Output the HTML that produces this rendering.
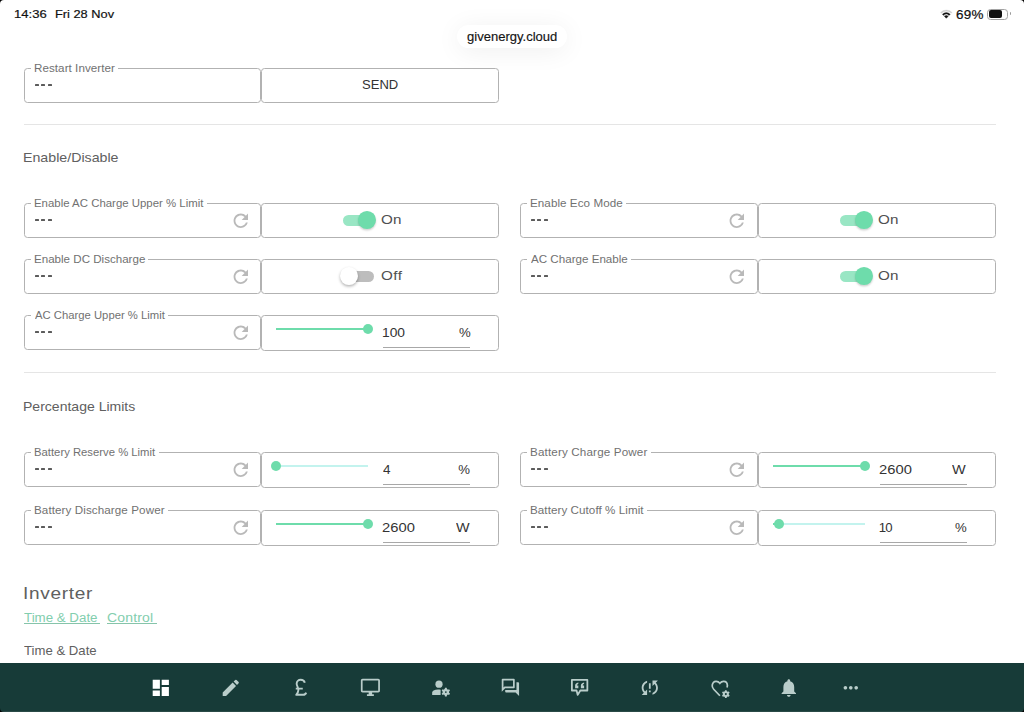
<!DOCTYPE html>
<html><head><meta charset="utf-8"><style>
html,body{margin:0;padding:0;width:1024px;height:712px;overflow:hidden;background:#fff;position:relative}
.t{position:absolute;white-space:pre;font-family:"Liberation Sans",sans-serif}
</style></head><body>
<svg style="position:absolute;left:0;top:0" width="1024" height="30" viewBox="0 0 1024 30"><path d="M946.3 18.2L944.46 16.36A2.6 2.6 0 0 1 948.14 16.36Z" fill="#111" stroke="#111" stroke-width="0.5" stroke-linejoin="round"/><path d="M943.54 15.44L942.34 14.24A5.6 5.6 0 0 1 950.26 14.24L949.06 15.44A3.9 3.9 0 0 0 943.54 15.44Z" fill="#111" stroke="#111" stroke-width="0.3" stroke-linejoin="round"/><path d="M941.42 13.32L940.50 12.40A8.2 8.2 0 0 1 952.10 12.40L951.18 13.32A6.9 6.9 0 0 0 941.42 13.32Z" fill="#cfcfcf" stroke="#cfcfcf" stroke-width="0.3" stroke-linejoin="round"/></svg>
<div style="position:absolute;left:987px;top:8.5px;width:19px;height:9px;border:1.2px solid #a3a3a3;border-radius:3.5px"></div>
<div style="position:absolute;left:989px;top:10.3px;width:12.6px;height:7.3px;background:#111;border-radius:2px"></div>
<div style="position:absolute;left:1009.5px;top:11.6px;width:1.3px;height:3.6px;background:#9a9a9a;border-radius:0 1px 1px 0"></div>
<div style="position:absolute;left:457px;top:25px;width:110px;height:23px;border-radius:12px;background:#fff;box-shadow:0 3px 26px rgba(0,0,0,0.065)"></div>
<div style="position:absolute;left:24px;top:68px;width:235px;height:33px;border:1px solid #b2b2b2;border-radius:3.5px"></div>
<div style="position:absolute;left:30.5px;top:67px;width:87.5px;height:3px;background:#fff"></div>
<div style="position:absolute;left:34.80px;top:84.20px;width:4.2px;height:1.5px;background:#5c5c5c;border-radius:0.5px"></div>
<div style="position:absolute;left:41.20px;top:84.20px;width:4.2px;height:1.5px;background:#5c5c5c;border-radius:0.5px"></div>
<div style="position:absolute;left:47.60px;top:84.20px;width:4.2px;height:1.5px;background:#5c5c5c;border-radius:0.5px"></div>
<div style="position:absolute;left:261px;top:68px;width:236px;height:33px;border:1px solid #b2b2b2;border-radius:3.5px"></div>
<div style="position:absolute;left:24px;top:124px;width:972px;height:1px;background:#e5e5e5"></div>
<div style="position:absolute;left:24px;top:203px;width:235px;height:33px;border:1px solid #b2b2b2;border-radius:3.5px"></div>
<div style="position:absolute;left:30.5px;top:202px;width:176.3px;height:3px;background:#fff"></div>
<div style="position:absolute;left:34.80px;top:219.20px;width:4.2px;height:1.5px;background:#5c5c5c;border-radius:0.5px"></div>
<div style="position:absolute;left:41.20px;top:219.20px;width:4.2px;height:1.5px;background:#5c5c5c;border-radius:0.5px"></div>
<div style="position:absolute;left:47.60px;top:219.20px;width:4.2px;height:1.5px;background:#5c5c5c;border-radius:0.5px"></div>
<svg style="position:absolute;left:229.8px;top:209.7px" width="21.6" height="21.6" viewBox="0 0 24 24"><path d="M17.65 6.35C16.2 4.9 14.21 4 12 4c-4.42 0-7.99 3.58-7.99 8s3.57 8 7.99 8c3.73 0 6.84-2.55 7.73-6h-2.08c-.82 2.33-3.04 4-5.65 4-3.31 0-6-2.69-6-6s2.69-6 6-6c1.66 0 3.14.69 4.22 1.78L13 11h7V4l-2.35 2.35z" fill="#b9b9b9"/></svg>
<div style="position:absolute;left:261px;top:203px;width:236px;height:33px;border:1px solid #b2b2b2;border-radius:3.5px"></div>
<div style="position:absolute;left:343.3px;top:214.5px;width:30.4px;height:11.5px;border-radius:6px;background:#6edcab;opacity:0.7"></div>
<div style="position:absolute;left:358.1px;top:211.3px;width:17.8px;height:17.8px;border-radius:50%;background:#6edcab;box-shadow:0 1.5px 2px rgba(0,0,0,0.18)"></div>
<div style="position:absolute;left:520px;top:203px;width:236px;height:33px;border:1px solid #b2b2b2;border-radius:3.5px"></div>
<div style="position:absolute;left:526.5px;top:202px;width:99.0px;height:3px;background:#fff"></div>
<div style="position:absolute;left:530.80px;top:219.20px;width:4.2px;height:1.5px;background:#5c5c5c;border-radius:0.5px"></div>
<div style="position:absolute;left:537.20px;top:219.20px;width:4.2px;height:1.5px;background:#5c5c5c;border-radius:0.5px"></div>
<div style="position:absolute;left:543.60px;top:219.20px;width:4.2px;height:1.5px;background:#5c5c5c;border-radius:0.5px"></div>
<svg style="position:absolute;left:725.8px;top:209.7px" width="21.6" height="21.6" viewBox="0 0 24 24"><path d="M17.65 6.35C16.2 4.9 14.21 4 12 4c-4.42 0-7.99 3.58-7.99 8s3.57 8 7.99 8c3.73 0 6.84-2.55 7.73-6h-2.08c-.82 2.33-3.04 4-5.65 4-3.31 0-6-2.69-6-6s2.69-6 6-6c1.66 0 3.14.69 4.22 1.78L13 11h7V4l-2.35 2.35z" fill="#b9b9b9"/></svg>
<div style="position:absolute;left:758px;top:203px;width:236px;height:33px;border:1px solid #b2b2b2;border-radius:3.5px"></div>
<div style="position:absolute;left:840.3px;top:214.5px;width:30.4px;height:11.5px;border-radius:6px;background:#6edcab;opacity:0.7"></div>
<div style="position:absolute;left:855.0999999999999px;top:211.3px;width:17.8px;height:17.8px;border-radius:50%;background:#6edcab;box-shadow:0 1.5px 2px rgba(0,0,0,0.18)"></div>
<div style="position:absolute;left:24px;top:259px;width:235px;height:33px;border:1px solid #b2b2b2;border-radius:3.5px"></div>
<div style="position:absolute;left:30.5px;top:258px;width:117.69999999999999px;height:3px;background:#fff"></div>
<div style="position:absolute;left:34.80px;top:275.20px;width:4.2px;height:1.5px;background:#5c5c5c;border-radius:0.5px"></div>
<div style="position:absolute;left:41.20px;top:275.20px;width:4.2px;height:1.5px;background:#5c5c5c;border-radius:0.5px"></div>
<div style="position:absolute;left:47.60px;top:275.20px;width:4.2px;height:1.5px;background:#5c5c5c;border-radius:0.5px"></div>
<svg style="position:absolute;left:229.8px;top:265.7px" width="21.6" height="21.6" viewBox="0 0 24 24"><path d="M17.65 6.35C16.2 4.9 14.21 4 12 4c-4.42 0-7.99 3.58-7.99 8s3.57 8 7.99 8c3.73 0 6.84-2.55 7.73-6h-2.08c-.82 2.33-3.04 4-5.65 4-3.31 0-6-2.69-6-6s2.69-6 6-6c1.66 0 3.14.69 4.22 1.78L13 11h7V4l-2.35 2.35z" fill="#b9b9b9"/></svg>
<div style="position:absolute;left:261px;top:259px;width:236px;height:33px;border:1px solid #b2b2b2;border-radius:3.5px"></div>
<div style="position:absolute;left:343.3px;top:270.5px;width:30.4px;height:11.5px;border-radius:6px;background:#bdbdbd"></div>
<div style="position:absolute;left:340.40000000000003px;top:267.3px;width:17.8px;height:17.8px;border-radius:50%;background:#fff;box-shadow:0 1.5px 3px rgba(0,0,0,0.3)"></div>
<div style="position:absolute;left:520px;top:259px;width:236px;height:33px;border:1px solid #b2b2b2;border-radius:3.5px"></div>
<div style="position:absolute;left:526.5px;top:258px;width:104.0px;height:3px;background:#fff"></div>
<div style="position:absolute;left:530.80px;top:275.20px;width:4.2px;height:1.5px;background:#5c5c5c;border-radius:0.5px"></div>
<div style="position:absolute;left:537.20px;top:275.20px;width:4.2px;height:1.5px;background:#5c5c5c;border-radius:0.5px"></div>
<div style="position:absolute;left:543.60px;top:275.20px;width:4.2px;height:1.5px;background:#5c5c5c;border-radius:0.5px"></div>
<svg style="position:absolute;left:725.8px;top:265.7px" width="21.6" height="21.6" viewBox="0 0 24 24"><path d="M17.65 6.35C16.2 4.9 14.21 4 12 4c-4.42 0-7.99 3.58-7.99 8s3.57 8 7.99 8c3.73 0 6.84-2.55 7.73-6h-2.08c-.82 2.33-3.04 4-5.65 4-3.31 0-6-2.69-6-6s2.69-6 6-6c1.66 0 3.14.69 4.22 1.78L13 11h7V4l-2.35 2.35z" fill="#b9b9b9"/></svg>
<div style="position:absolute;left:758px;top:259px;width:236px;height:33px;border:1px solid #b2b2b2;border-radius:3.5px"></div>
<div style="position:absolute;left:840.3px;top:270.5px;width:30.4px;height:11.5px;border-radius:6px;background:#6edcab;opacity:0.7"></div>
<div style="position:absolute;left:855.0999999999999px;top:267.3px;width:17.8px;height:17.8px;border-radius:50%;background:#6edcab;box-shadow:0 1.5px 2px rgba(0,0,0,0.18)"></div>
<div style="position:absolute;left:24px;top:315px;width:235px;height:33px;border:1px solid #b2b2b2;border-radius:3.5px"></div>
<div style="position:absolute;left:30.5px;top:314px;width:137.6px;height:3px;background:#fff"></div>
<div style="position:absolute;left:34.80px;top:331.20px;width:4.2px;height:1.5px;background:#5c5c5c;border-radius:0.5px"></div>
<div style="position:absolute;left:41.20px;top:331.20px;width:4.2px;height:1.5px;background:#5c5c5c;border-radius:0.5px"></div>
<div style="position:absolute;left:47.60px;top:331.20px;width:4.2px;height:1.5px;background:#5c5c5c;border-radius:0.5px"></div>
<svg style="position:absolute;left:229.8px;top:321.7px" width="21.6" height="21.6" viewBox="0 0 24 24"><path d="M17.65 6.35C16.2 4.9 14.21 4 12 4c-4.42 0-7.99 3.58-7.99 8s3.57 8 7.99 8c3.73 0 6.84-2.55 7.73-6h-2.08c-.82 2.33-3.04 4-5.65 4-3.31 0-6-2.69-6-6s2.69-6 6-6c1.66 0 3.14.69 4.22 1.78L13 11h7V4l-2.35 2.35z" fill="#b9b9b9"/></svg>
<div style="position:absolute;left:261px;top:315px;width:236px;height:34px;border:1px solid #b2b2b2;border-radius:3.5px"></div>
<div style="position:absolute;left:275.8px;top:328.4px;width:92.0px;height:2px;background:#c3f3ee"></div>
<div style="position:absolute;left:275.8px;top:328.4px;width:92.0px;height:2px;background:#6edcab"></div>
<div style="position:absolute;left:362.8px;top:324.4px;width:10px;height:10px;border-radius:50%;background:#6edcab"></div>
<div style="position:absolute;left:382.5px;top:346.5px;width:87px;height:1px;background:#a8a8a8"></div>
<div style="position:absolute;left:24px;top:372px;width:972px;height:1px;background:#e5e5e5"></div>
<div style="position:absolute;left:24px;top:452px;width:235px;height:33px;border:1px solid #b2b2b2;border-radius:3.5px"></div>
<div style="position:absolute;left:30.5px;top:451px;width:128.0px;height:3px;background:#fff"></div>
<div style="position:absolute;left:34.80px;top:468.20px;width:4.2px;height:1.5px;background:#5c5c5c;border-radius:0.5px"></div>
<div style="position:absolute;left:41.20px;top:468.20px;width:4.2px;height:1.5px;background:#5c5c5c;border-radius:0.5px"></div>
<div style="position:absolute;left:47.60px;top:468.20px;width:4.2px;height:1.5px;background:#5c5c5c;border-radius:0.5px"></div>
<svg style="position:absolute;left:229.8px;top:458.7px" width="21.6" height="21.6" viewBox="0 0 24 24"><path d="M17.65 6.35C16.2 4.9 14.21 4 12 4c-4.42 0-7.99 3.58-7.99 8s3.57 8 7.99 8c3.73 0 6.84-2.55 7.73-6h-2.08c-.82 2.33-3.04 4-5.65 4-3.31 0-6-2.69-6-6s2.69-6 6-6c1.66 0 3.14.69 4.22 1.78L13 11h7V4l-2.35 2.35z" fill="#b9b9b9"/></svg>
<div style="position:absolute;left:261px;top:452px;width:236px;height:34px;border:1px solid #b2b2b2;border-radius:3.5px"></div>
<div style="position:absolute;left:275.8px;top:465.4px;width:92.0px;height:2px;background:#c3f3ee"></div>
<div style="position:absolute;left:270.8px;top:461.4px;width:10px;height:10px;border-radius:50%;background:#6edcab"></div>
<div style="position:absolute;left:382.5px;top:483.5px;width:87px;height:1px;background:#a8a8a8"></div>
<div style="position:absolute;left:520px;top:452px;width:236px;height:33px;border:1px solid #b2b2b2;border-radius:3.5px"></div>
<div style="position:absolute;left:526.5px;top:451px;width:124.0px;height:3px;background:#fff"></div>
<div style="position:absolute;left:530.80px;top:468.20px;width:4.2px;height:1.5px;background:#5c5c5c;border-radius:0.5px"></div>
<div style="position:absolute;left:537.20px;top:468.20px;width:4.2px;height:1.5px;background:#5c5c5c;border-radius:0.5px"></div>
<div style="position:absolute;left:543.60px;top:468.20px;width:4.2px;height:1.5px;background:#5c5c5c;border-radius:0.5px"></div>
<svg style="position:absolute;left:725.8px;top:458.7px" width="21.6" height="21.6" viewBox="0 0 24 24"><path d="M17.65 6.35C16.2 4.9 14.21 4 12 4c-4.42 0-7.99 3.58-7.99 8s3.57 8 7.99 8c3.73 0 6.84-2.55 7.73-6h-2.08c-.82 2.33-3.04 4-5.65 4-3.31 0-6-2.69-6-6s2.69-6 6-6c1.66 0 3.14.69 4.22 1.78L13 11h7V4l-2.35 2.35z" fill="#b9b9b9"/></svg>
<div style="position:absolute;left:758px;top:452px;width:236px;height:34px;border:1px solid #b2b2b2;border-radius:3.5px"></div>
<div style="position:absolute;left:772.8px;top:465.4px;width:92.0px;height:2px;background:#c3f3ee"></div>
<div style="position:absolute;left:772.8px;top:465.4px;width:92.0px;height:2px;background:#6edcab"></div>
<div style="position:absolute;left:859.8px;top:461.4px;width:10px;height:10px;border-radius:50%;background:#6edcab"></div>
<div style="position:absolute;left:879.5px;top:483.5px;width:87px;height:1px;background:#a8a8a8"></div>
<div style="position:absolute;left:24px;top:510px;width:235px;height:33px;border:1px solid #b2b2b2;border-radius:3.5px"></div>
<div style="position:absolute;left:30.5px;top:509px;width:137.2px;height:3px;background:#fff"></div>
<div style="position:absolute;left:34.80px;top:526.20px;width:4.2px;height:1.5px;background:#5c5c5c;border-radius:0.5px"></div>
<div style="position:absolute;left:41.20px;top:526.20px;width:4.2px;height:1.5px;background:#5c5c5c;border-radius:0.5px"></div>
<div style="position:absolute;left:47.60px;top:526.20px;width:4.2px;height:1.5px;background:#5c5c5c;border-radius:0.5px"></div>
<svg style="position:absolute;left:229.8px;top:516.7px" width="21.6" height="21.6" viewBox="0 0 24 24"><path d="M17.65 6.35C16.2 4.9 14.21 4 12 4c-4.42 0-7.99 3.58-7.99 8s3.57 8 7.99 8c3.73 0 6.84-2.55 7.73-6h-2.08c-.82 2.33-3.04 4-5.65 4-3.31 0-6-2.69-6-6s2.69-6 6-6c1.66 0 3.14.69 4.22 1.78L13 11h7V4l-2.35 2.35z" fill="#b9b9b9"/></svg>
<div style="position:absolute;left:261px;top:510px;width:236px;height:34px;border:1px solid #b2b2b2;border-radius:3.5px"></div>
<div style="position:absolute;left:275.8px;top:523.4px;width:92.0px;height:2px;background:#c3f3ee"></div>
<div style="position:absolute;left:275.8px;top:523.4px;width:92.0px;height:2px;background:#6edcab"></div>
<div style="position:absolute;left:362.8px;top:519.4px;width:10px;height:10px;border-radius:50%;background:#6edcab"></div>
<div style="position:absolute;left:382.5px;top:541.5px;width:87px;height:1px;background:#a8a8a8"></div>
<div style="position:absolute;left:520px;top:510px;width:236px;height:33px;border:1px solid #b2b2b2;border-radius:3.5px"></div>
<div style="position:absolute;left:526.5px;top:509px;width:120.39999999999998px;height:3px;background:#fff"></div>
<div style="position:absolute;left:530.80px;top:526.20px;width:4.2px;height:1.5px;background:#5c5c5c;border-radius:0.5px"></div>
<div style="position:absolute;left:537.20px;top:526.20px;width:4.2px;height:1.5px;background:#5c5c5c;border-radius:0.5px"></div>
<div style="position:absolute;left:543.60px;top:526.20px;width:4.2px;height:1.5px;background:#5c5c5c;border-radius:0.5px"></div>
<svg style="position:absolute;left:725.8px;top:516.7px" width="21.6" height="21.6" viewBox="0 0 24 24"><path d="M17.65 6.35C16.2 4.9 14.21 4 12 4c-4.42 0-7.99 3.58-7.99 8s3.57 8 7.99 8c3.73 0 6.84-2.55 7.73-6h-2.08c-.82 2.33-3.04 4-5.65 4-3.31 0-6-2.69-6-6s2.69-6 6-6c1.66 0 3.14.69 4.22 1.78L13 11h7V4l-2.35 2.35z" fill="#b9b9b9"/></svg>
<div style="position:absolute;left:758px;top:510px;width:236px;height:34px;border:1px solid #b2b2b2;border-radius:3.5px"></div>
<div style="position:absolute;left:772.8px;top:523.4px;width:92.0px;height:2px;background:#c3f3ee"></div>
<div style="position:absolute;left:772.8px;top:523.4px;width:5.75px;height:2px;background:#6edcab"></div>
<div style="position:absolute;left:773.55px;top:519.4px;width:10px;height:10px;border-radius:50%;background:#6edcab"></div>
<div style="position:absolute;left:879.5px;top:541.5px;width:87px;height:1px;background:#a8a8a8"></div>
<div style="position:absolute;left:24px;top:622.6px;width:76.4px;height:1px;background:#86c4aa"></div>
<div style="position:absolute;left:107.4px;top:622.6px;width:49.2px;height:1px;background:#86c4aa"></div>
<div style="position:absolute;left:0;top:662.5px;width:1024px;height:49.5px;background:#173b38"></div>
<div style="position:absolute;left:0;top:711px;width:1024px;height:1px;background:#2a4a47"></div>
<svg style="position:absolute;left:150.00px;top:677.00px" width="21.6" height="21.6" viewBox="0 0 24 24"><path d="M3 13h8V3H3v10zm0 8h8v-6H3v6zm10 0h8V11h-8v10zm0-18v6h8V3h-8z" fill="#ffffff"/></svg>
<svg style="position:absolute;left:220.30px;top:677.00px" width="21.6" height="21.6" viewBox="0 0 24 24"><path d="M3 17.25V21h3.75L17.81 9.94l-3.75-3.75L3 17.25zM20.71 7.04c.39-.39.39-1.02 0-1.41l-2.34-2.34a.9959.9959 0 0 0-1.41 0l-1.83 1.83 3.75 3.75 1.83-1.83z" fill="#b9cdca"/></svg>
<svg style="position:absolute;left:290.10px;top:677.00px" width="21.6" height="21.6" viewBox="0 0 24 24"><path d="M16.5 6.4C15.9 4.3 14.1 3.0 11.9 3.0C9.3 3.0 7.4 5.0 7.4 7.5C7.4 9.7 9.3 11.5 9.3 14.5C9.3 17 8.0 18.6 6.9 19.8H14.8C16.4 19.8 17.5 19 18 17.4M6.4 12.9H14.2" fill="none" stroke="#b9cdca" stroke-width="2.1" stroke-linejoin="round"/></svg>
<svg style="position:absolute;left:359.80px;top:677.10px" width="20.8" height="20.8" viewBox="0 0 24 24"><path d="M21 2H3c-1.1 0-2 .9-2 2v12c0 1.1.9 2 2 2h7v2H8v2h8v-2h-2v-2h7c1.1 0 2-.9 2-2V4c0-1.1-.9-2-2-2zm0 14H3V4h18v12z" fill="#b9cdca"/></svg>
<svg style="position:absolute;left:429.70px;top:677.00px" width="21.6" height="21.6" viewBox="0 0 24 24"><circle cx="10" cy="8" r="4" fill="#b9cdca"/><path d="M2.4 20V17.6C2.4 16.4 3 15.4 4 14.9C6 13.9 8.5 13.6 11.8 14.1V20Z" fill="#b9cdca"/><g transform="translate(17.6 16.8) scale(0.96) translate(-17 -16)"><path d="M20.75 16c0-.22-.03-.42-.06-.63l1.14-1.01-1-1.73-1.45.49c-.32-.27-.68-.48-1.08-.63L18 11h-2l-.3 1.49c-.4.15-.76.36-1.08.63l-1.45-.49-1 1.73 1.14 1.01c-.03.21-.06.41-.06.63s.03.42.06.63l-1.14 1.01 1 1.73 1.45-.49c.32.27.68.48 1.08.63L16 21h2l.3-1.49c.4-.15.76-.36 1.08-.63l1.45.49 1-1.73-1.14-1.01c.03-.21.06-.41.06-.63z" fill="#b9cdca" stroke="#173b38" stroke-width="1.3" paint-order="stroke"/><circle cx="17" cy="16" r="1.0" fill="#173b38"/></g></svg>
<svg style="position:absolute;left:499.50px;top:677.00px" width="20.8" height="20.8" viewBox="0 0 24 24"><path d="M15 4v7H5.17l-.59.59-.58.58V4h11m1-2H3c-.55 0-1 .45-1 1v14l4-4h10c.55 0 1-.45 1-1V3c0-.55-.45-1-1-1zm5 4h-2v9H6v2c0 .55.45 1 1 1h11l4 4V7c0-.55-.45-1-1-1z" fill="#b9cdca"/></svg>
<svg style="position:absolute;left:569.00px;top:677.00px" width="21.6" height="21.6" viewBox="0 0 24 24"><path d="M3.2 3.2H20.4V15H12.6L9.7 19.9L8.4 15H3.2Z" fill="none" stroke="#b9cdca" stroke-width="2" stroke-linejoin="round"/><path d="M6.8 12.4V9.7C6.8 8 7.8 6.8 10.4 6.2V7.6C9.4 8 8.9 8.6 8.8 9.4H10.4V12.4Z M13.2 12.4V9.7C13.2 8 14.2 6.8 16.8 6.2V7.6C15.8 8 15.3 8.6 15.2 9.4H16.8V12.4Z" fill="#b9cdca"/></svg>
<svg style="position:absolute;left:638.80px;top:677.00px" width="21.6" height="21.6" viewBox="0 0 24 24"><path d="M3 12c0 2.21.91 4.2 2.36 5.64L3 20h6v-6l-2.24 2.24C5.68 15.15 5 13.66 5 12c0-2.61 1.67-4.83 4-5.65V4.26C5.55 5.15 3 8.27 3 12zm8 5h2v-2h-2v2zM21 4h-6v6l2.24-2.24C18.32 8.85 19 10.34 19 12c0 2.61-1.67 4.830-4 5.65v2.09c3.45-.89 6-4.01 6-7.74 0-2.21-.91-4.2-2.36-5.64L21 4zm-10 9h2V7h-2v6z" fill="#b9cdca"/></svg>
<svg style="position:absolute;left:708.70px;top:677.60px" width="21.6" height="21.6" viewBox="0 0 24 24"><path d="M12.1 19.7L5.2 12.5C3.9 11.1 3.3 9.7 3.6 8.0C4.0 5.5 5.6 3.8 7.8 3.7C9.6 3.6 11.1 4.6 12.1 5.9C13.1 4.6 14.6 3.6 16.4 3.7C18.6 3.8 20.3 5.6 20.4 8.0C20.5 9 20.3 9.8 20.0 10.6" fill="none" stroke="#b9cdca" stroke-width="1.9"/><g transform="translate(18.7 17.9) scale(0.88) translate(-17 -16)"><path d="M20.75 16c0-.22-.03-.42-.06-.63l1.14-1.01-1-1.73-1.45.49c-.32-.27-.68-.48-1.08-.63L18 11h-2l-.3 1.49c-.4.15-.76.36-1.08.63l-1.45-.49-1 1.73 1.14 1.01c-.03.21-.06.41-.06.63s.03.42.06.63l-1.14 1.01 1 1.73 1.45-.49c.32.27.68.48 1.08.63L16 21h2l.3-1.49c.4-.15.76-.36 1.08-.63l1.45.49 1-1.73-1.14-1.01c.03-.21.06-.41.06-.63z" fill="#b9cdca" stroke="#173b38" stroke-width="1.2" paint-order="stroke"/><circle cx="17" cy="16" r="1.3" fill="#173b38"/></g></svg>
<svg style="position:absolute;left:778.40px;top:677.20px" width="21.6" height="21.6" viewBox="0 0 24 24"><path d="M12 22c1.1 0 2-.9 2-2h-4c0 1.1.89 2 2 2zm6-6v-5c0-3.07-1.64-5.64-4.5-6.32V4c0-.83-.67-1.5-1.5-1.5s-1.5.67-1.5 1.5v.68C7.63 5.36 6 7.92 6 11v5l-2 2v1h16v-1l-2-2z" fill="#b9cdca"/></svg>
<svg style="position:absolute;left:840.00px;top:677.00px" width="21.6" height="21.6" viewBox="0 0 24 24"><path d="M6 10c-1.1 0-2 .9-2 2s.9 2 2 2 2-.9 2-2-.9-2-2-2zm12 0c-1.1 0-2 .9-2 2s.9 2 2 2 2-.9 2-2-.9-2-2-2zm-6 0c-1.1 0-2 .9-2 2s.9 2 2 2 2-.9 2-2-.9-2-2-2z" fill="#b9cdca"/></svg>
<div class="t" style="left:13.95px;top:8.67px;font-size:11.8px;line-height:11.8px;letter-spacing:0.000px;color:#111;font-weight:400;transform:scaleX(1.1074);transform-origin:0 0;-webkit-text-stroke:0.2px #111;">14:36</div>
<div class="t" style="left:54.98px;top:8.67px;font-size:11.8px;line-height:11.8px;letter-spacing:0.000px;color:#111;font-weight:400;transform:scaleX(1.0850);transform-origin:0 0;-webkit-text-stroke:0.2px #111;">Fri 28 Nov</div>
<div class="t" style="left:956.13px;top:8.70px;font-size:12.0px;line-height:12.0px;letter-spacing:0.266px;color:#111;font-weight:400;transform:scaleX(1.1200);transform-origin:0 0;-webkit-text-stroke:0.2px #111;">69%</div>
<div class="t" style="left:466.88px;top:30.82px;font-size:12.8px;line-height:12.8px;letter-spacing:0.000px;color:#141414;font-weight:400;transform:scaleX(1.0180);transform-origin:0 0;-webkit-text-stroke:0.15px #141414;">givenergy.cloud</div>
<div class="t" style="left:33.77px;top:63.56px;font-size:10.4px;line-height:10.4px;letter-spacing:0.042px;color:#717171;font-weight:400;transform:scaleX(1.1200);transform-origin:0 0;">Restart Inverter</div>
<div class="t" style="left:362.35px;top:79.42px;font-size:12.1px;line-height:12.1px;letter-spacing:0.000px;color:#333;font-weight:400;transform:scaleX(1.0793);transform-origin:0 0;">SEND</div>
<div class="t" style="left:22.86px;top:152.42px;font-size:12.8px;line-height:12.8px;letter-spacing:0.000px;color:#606060;font-weight:400;transform:scaleX(1.1091);transform-origin:0 0;">Enable/Disable</div>
<div class="t" style="left:33.79px;top:198.56px;font-size:10.4px;line-height:10.4px;letter-spacing:0.000px;color:#717171;font-weight:400;transform:scaleX(1.0991);transform-origin:0 0;">Enable AC Charge Upper % Limit</div>
<div class="t" style="left:381.24px;top:212.74px;font-size:13.6px;line-height:13.6px;letter-spacing:0.104px;color:#505050;font-weight:400;transform:scaleX(1.1200);transform-origin:0 0;">On</div>
<div class="t" style="left:529.77px;top:198.56px;font-size:10.4px;line-height:10.4px;letter-spacing:0.051px;color:#717171;font-weight:400;transform:scaleX(1.1200);transform-origin:0 0;">Enable Eco Mode</div>
<div class="t" style="left:878.24px;top:212.74px;font-size:13.6px;line-height:13.6px;letter-spacing:0.104px;color:#505050;font-weight:400;transform:scaleX(1.1200);transform-origin:0 0;">On</div>
<div class="t" style="left:33.77px;top:254.56px;font-size:10.4px;line-height:10.4px;letter-spacing:0.000px;color:#717171;font-weight:400;transform:scaleX(1.1145);transform-origin:0 0;">Enable DC Discharge</div>
<div class="t" style="left:381.24px;top:268.74px;font-size:13.6px;line-height:13.6px;letter-spacing:0.427px;color:#505050;font-weight:400;transform:scaleX(1.1200);transform-origin:0 0;">Off</div>
<div class="t" style="left:530.70px;top:254.56px;font-size:10.4px;line-height:10.4px;letter-spacing:0.000px;color:#717171;font-weight:400;transform:scaleX(1.1170);transform-origin:0 0;">AC Charge Enable</div>
<div class="t" style="left:878.24px;top:268.74px;font-size:13.6px;line-height:13.6px;letter-spacing:0.104px;color:#505050;font-weight:400;transform:scaleX(1.1200);transform-origin:0 0;">On</div>
<div class="t" style="left:34.70px;top:310.56px;font-size:10.4px;line-height:10.4px;letter-spacing:0.000px;color:#717171;font-weight:400;transform:scaleX(1.0861);transform-origin:0 0;">AC Charge Upper % Limit</div>
<div class="t" style="left:381.70px;top:325.88px;font-size:13.2px;line-height:13.2px;letter-spacing:0.000px;color:#333;font-weight:400;transform:scaleX(1.0459);transform-origin:0 0;">100</div>
<div class="t" style="left:459.07px;top:325.88px;font-size:13.2px;line-height:13.2px;letter-spacing:0.000px;color:#333;font-weight:400;">%</div>
<div class="t" style="left:22.98px;top:400.92px;font-size:12.8px;line-height:12.8px;letter-spacing:0.000px;color:#606060;font-weight:400;transform:scaleX(1.0961);transform-origin:0 0;">Percentage Limits</div>
<div class="t" style="left:33.80px;top:447.56px;font-size:10.4px;line-height:10.4px;letter-spacing:0.000px;color:#717171;font-weight:400;transform:scaleX(1.0872);transform-origin:0 0;">Battery Reserve % Limit</div>
<div class="t" style="left:382.53px;top:462.88px;font-size:13.2px;line-height:13.2px;letter-spacing:0.000px;color:#333;font-weight:400;transform:scaleX(1.0250);transform-origin:0 0;">4</div>
<div class="t" style="left:458.37px;top:462.88px;font-size:13.2px;line-height:13.2px;letter-spacing:0.000px;color:#333;font-weight:400;">%</div>
<div class="t" style="left:529.77px;top:447.56px;font-size:10.4px;line-height:10.4px;letter-spacing:0.134px;color:#717171;font-weight:400;transform:scaleX(1.1200);transform-origin:0 0;">Battery Charge Power</div>
<div class="t" style="left:879.06px;top:462.88px;font-size:13.2px;line-height:13.2px;letter-spacing:0.063px;color:#333;font-weight:400;transform:scaleX(1.1200);transform-origin:0 0;">2600</div>
<div class="t" style="left:952.35px;top:462.88px;font-size:13.2px;line-height:13.2px;letter-spacing:0.000px;color:#333;font-weight:400;transform:scaleX(1.0997);transform-origin:0 0;">W</div>
<div class="t" style="left:33.77px;top:505.56px;font-size:10.4px;line-height:10.4px;letter-spacing:0.075px;color:#717171;font-weight:400;transform:scaleX(1.1200);transform-origin:0 0;">Battery Discharge Power</div>
<div class="t" style="left:382.06px;top:520.88px;font-size:13.2px;line-height:13.2px;letter-spacing:0.003px;color:#333;font-weight:400;transform:scaleX(1.1200);transform-origin:0 0;">2600</div>
<div class="t" style="left:455.86px;top:520.88px;font-size:13.2px;line-height:13.2px;letter-spacing:0.000px;color:#333;font-weight:400;transform:scaleX(1.0916);transform-origin:0 0;">W</div>
<div class="t" style="left:529.77px;top:505.56px;font-size:10.4px;line-height:10.4px;letter-spacing:0.052px;color:#717171;font-weight:400;transform:scaleX(1.1200);transform-origin:0 0;">Battery Cutoff % Limit</div>
<div class="t" style="left:878.74px;top:520.88px;font-size:13.2px;line-height:13.2px;letter-spacing:-0.868px;color:#333;font-weight:400;">10</div>
<div class="t" style="left:954.97px;top:520.88px;font-size:13.2px;line-height:13.2px;letter-spacing:0.000px;color:#333;font-weight:400;">%</div>
<div class="t" style="left:22.89px;top:585.45px;font-size:17.0px;line-height:17.0px;letter-spacing:0.606px;color:#606060;font-weight:400;transform:scaleX(1.1200);transform-origin:0 0;">Inverter</div>
<div class="t" style="left:23.53px;top:611.98px;font-size:12.5px;line-height:12.5px;letter-spacing:0.000px;color:#82ceae;font-weight:400;transform:scaleX(1.0652);transform-origin:0 0;">Time &amp; Date</div>
<div class="t" style="left:106.70px;top:611.98px;font-size:12.5px;line-height:12.5px;letter-spacing:0.158px;color:#82ceae;font-weight:400;transform:scaleX(1.1200);transform-origin:0 0;">Control</div>
<div class="t" style="left:24.34px;top:645.16px;font-size:12.4px;line-height:12.4px;letter-spacing:0.000px;color:#606060;font-weight:400;transform:scaleX(1.0620);transform-origin:0 0;">Time &amp; Date</div>
<div style="position:absolute;left:0;top:0;width:1024px;height:712px;border-radius:4px;box-shadow:0 0 0 12px #000;pointer-events:none"></div>
</body></html>
